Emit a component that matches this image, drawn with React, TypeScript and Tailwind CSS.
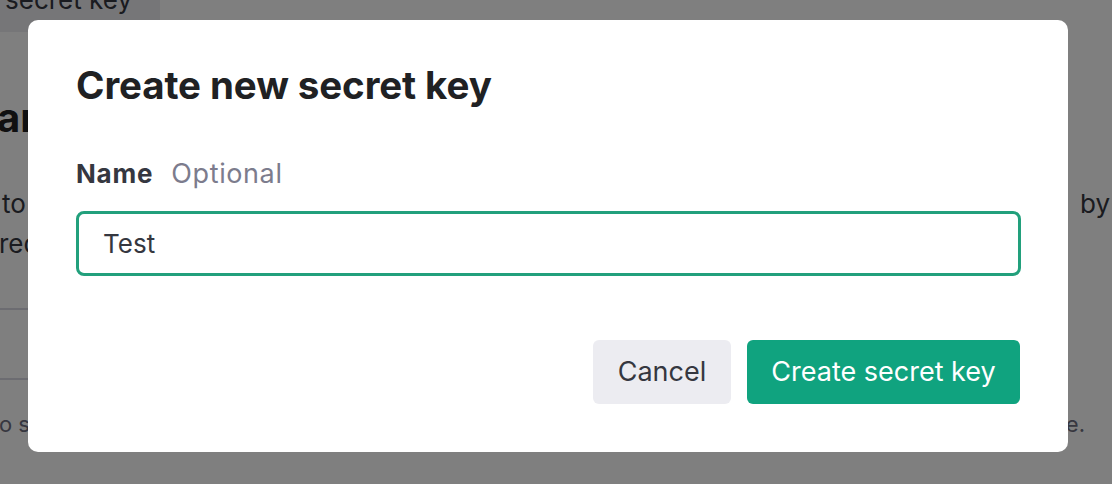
import React from "react";

export default function App() {
  return (
    <div className="relative w-[1112px] h-[484px] overflow-hidden bg-white font-['Inter','Noto_Sans',sans-serif] text-[#353740]">
      {/* Background page */}
      <div className="flex flex-col">
        <div className="h-[32px] flex">
          <div className="w-[160px] h-[32px] bg-[#ececf1] overflow-hidden pl-[5px]">
            <div className="text-[26px] leading-[26px] mt-[-13px] whitespace-nowrap">secret key</div>
          </div>
        </div>
        <div className="mt-[62px] ml-[-3px] text-[40px] leading-[48px] font-bold text-[#202123] whitespace-nowrap">
          ar
        </div>
        <div className="mt-[42px] text-[26px] leading-[40px] flex justify-between whitespace-nowrap">
          <div className="flex flex-col pl-[2px]">
            <span>to</span>
            <span className="ml-[-3px]">red</span>
          </div>
          <span className="self-start pr-[2px]">by</span>
        </div>
        <div className="mt-[44px] w-[1000px] border-t-2 border-[#d9d9e3] h-[70px]" />
        <div className="w-[1000px] border-t-2 border-[#d9d9e3]" />
        <div className="mt-[29px] text-[22px] leading-[30px] text-[#6e6e80] flex justify-between whitespace-nowrap">
          <span className="ml-[-8px]">to see</span>
          <span className="pr-[27px]">e.</span>
        </div>
      </div>

      {/* Overlay */}
      <div className="absolute inset-0 bg-black/50 pt-[20px] pl-[28px]">
        <div className="w-[1040px] h-[432px] rounded-[10px] bg-white px-[48px] pt-[41px] flex flex-col">
          <h2 className="text-[38.5px] leading-[48px] font-bold text-[#202123] tracking-[-0.1px]">
            Create new secret key
          </h2>
          <div className="mt-[49px] flex items-baseline gap-[18px] text-[26px] leading-[32px]">
            <span className="font-bold text-[#353740] tracking-[0.8px]">Name</span>
            <span className="text-[#7c7c8d] text-[27px] tracking-[0.6px]">Optional</span>
          </div>
          <div className="mt-[21px] h-[65px] w-[945px] rounded-[8px] border-[3px] border-[#22a07c] flex items-center px-[24px]">
            <span className="text-[26px] text-[#353740]">Test</span>
          </div>
          <div className="mt-[64px] flex justify-end gap-[16px] pr-[0px]">
            <button className="h-[64px] w-[138px] rounded-[6px] bg-[#ececf1] text-[27px] text-[#353740]">
              Cancel
            </button>
            <button className="h-[64px] w-[273px] rounded-[6px] bg-[#10a37f] text-[27px] text-white">
              Create secret key
            </button>
          </div>
        </div>
      </div>
    </div>
  );
}
